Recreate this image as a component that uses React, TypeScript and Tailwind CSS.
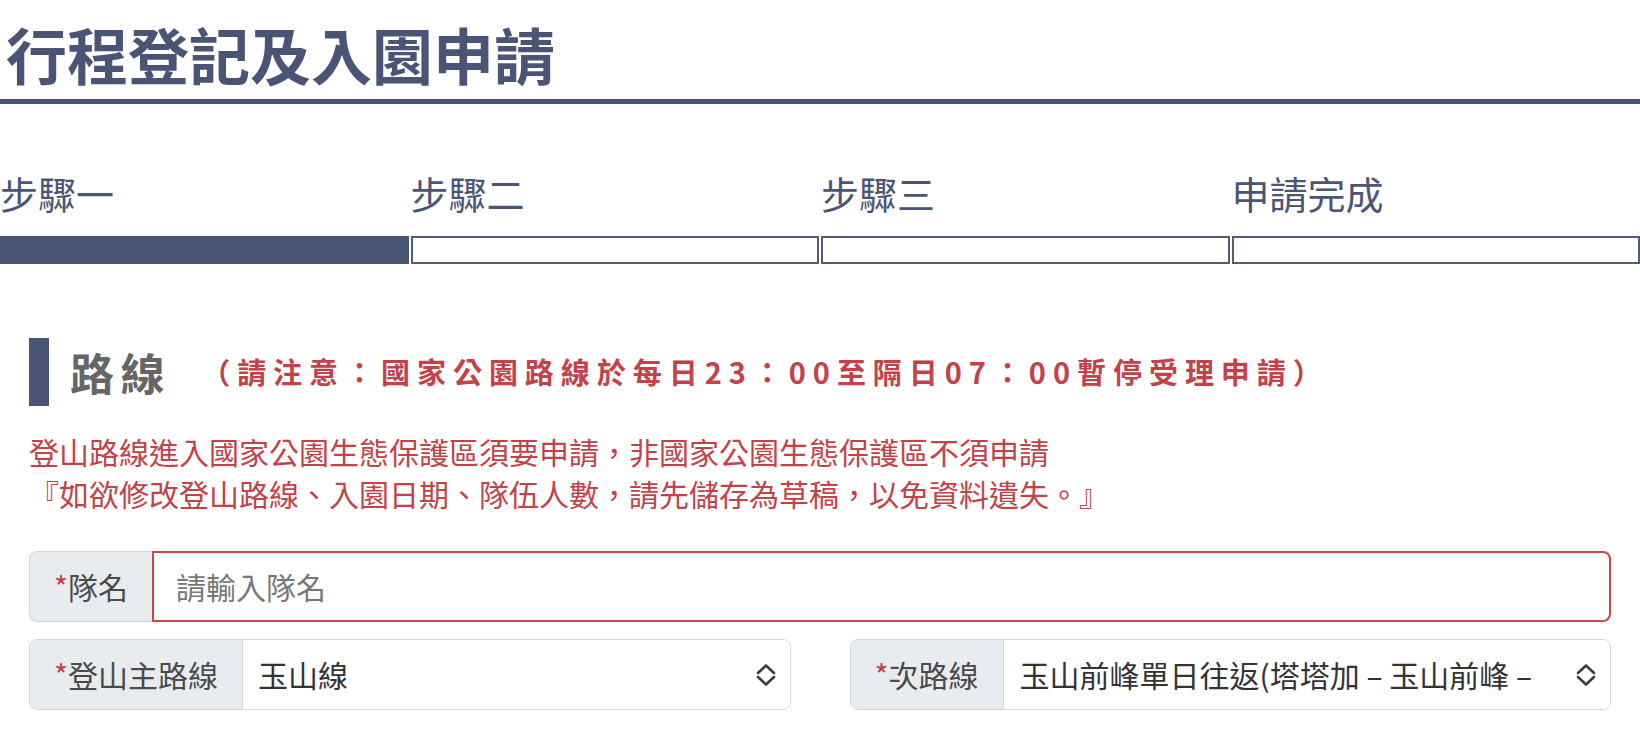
import React from 'react';

const steps = ['步驟一', '步驟二', '步驟三', '申請完成'];

const font = "font-['Noto_Sans_CJK_TC','Noto_Sans',sans-serif]";

const Chevrons: React.FC = () => (
  <svg className="w-[20px] h-[24px] shrink-0" viewBox="0 0 20 24" fill="none" stroke="#3a3d44" strokeWidth="2.6" strokeLinecap="round" strokeLinejoin="round">
    <path d="M2 10 L10 2.5 L18 10" />
    <path d="M2 14 L10 21.5 L18 14" />
  </svg>
);

const SelectGroup: React.FC<{ label: string; value: string; padText: string; gap: string }> = ({ label, value, padText, gap }) => (
  <div className="flex h-[71px] rounded-[8px] border border-[#d3d6da] overflow-hidden">
    <div className="flex items-center px-[24px] bg-[#e9ecef] border-r border-[#d3d6da] text-[30px] text-[#4a4a4a] whitespace-nowrap">
      <span className="text-[#c3424a]">*</span>
      {label}
    </div>
    <div className={`flex-1 flex items-center bg-white min-w-0 pr-[14px] ${padText}`}>
      <div className="flex-1 min-w-0 overflow-hidden whitespace-nowrap text-[30px] text-[#333]">{value}</div>
      <div className={gap}>
        <Chevrons />
      </div>
    </div>
  </div>
);

export default function App() {
  return (
    <div className={`bg-white min-h-screen ${font}`}>
      <h1 className="text-[61px] font-bold text-[#4a5575] leading-[64px] pt-[22px] mb-[13px] pl-[6px]">
        行程登記及入園申請
      </h1>
      <div className="h-[5px] bg-[#4a5575]" />

      <div className="grid grid-cols-4 gap-x-[2px] mt-[69px]">
        {steps.map((s) => (
          <div key={s} className="text-[38px] leading-[40px] text-[#4a5575]">{s}</div>
        ))}
        {steps.map((s, i) => (
          <div
            key={s + 'bar'}
            className={`mt-[23px] h-[28px] border-2 ${i === 0 ? 'bg-[#4a5575] border-[#4a5575]' : 'bg-white border-[#555b70]'}`}
          />
        ))}
      </div>

      <div className="px-[29px]">
        <div className="flex items-center h-[68px] mt-[74px]">
          <div className="w-[20px] h-full bg-[#4a5575]" />
          <h2 className="ml-[21px] text-[44px] font-bold text-[#666] tracking-[0.15em]">路線</h2>
          <span className="ml-[30px] text-[29px] font-bold text-[#c3424a] tracking-[0.24em]">
            （請注意：國家公園路線於每日23：00至隔日07：00暫停受理申請）
          </span>
        </div>

        <p className="mt-[24px] text-[30px] leading-[42px] text-[#c3424a]">
          登山路線進入國家公園生態保護區須要申請，非國家公園生態保護區不須申請
          <br />
          『如欲修改登山路線、入園日期、隊伍人數，請先儲存為草稿，以免資料遺失。』
        </p>

        <div className="mt-[37px] flex h-[71px]">
          <div className="flex items-center px-[24px] bg-[#e9ecef] border border-r-0 border-[#d3d6da] rounded-l-[8px] text-[30px] text-[#4a4a4a] whitespace-nowrap">
            <span className="text-[#c3424a]">*</span>
            隊名
          </div>
          <input
            placeholder="請輸入隊名"
            className="flex-1 min-w-0 border-2 border-[#c9474b] rounded-r-[8px] px-[22px] text-[30px] text-[#333] placeholder:text-[#777] outline-none"
          />
        </div>

        <div className="mt-[17px] grid grid-cols-2 gap-x-[59px]">
          <SelectGroup label="登山主路線" value="玉山線" padText="pl-[15px]" gap="ml-[8px]" />
          <SelectGroup label="次路線" value="玉山前峰單日往返(塔塔加 – 玉山前峰 – 塔塔加)" padText="pl-[16px]" gap="ml-[38px]" />
        </div>
      </div>
    </div>
  );
}
